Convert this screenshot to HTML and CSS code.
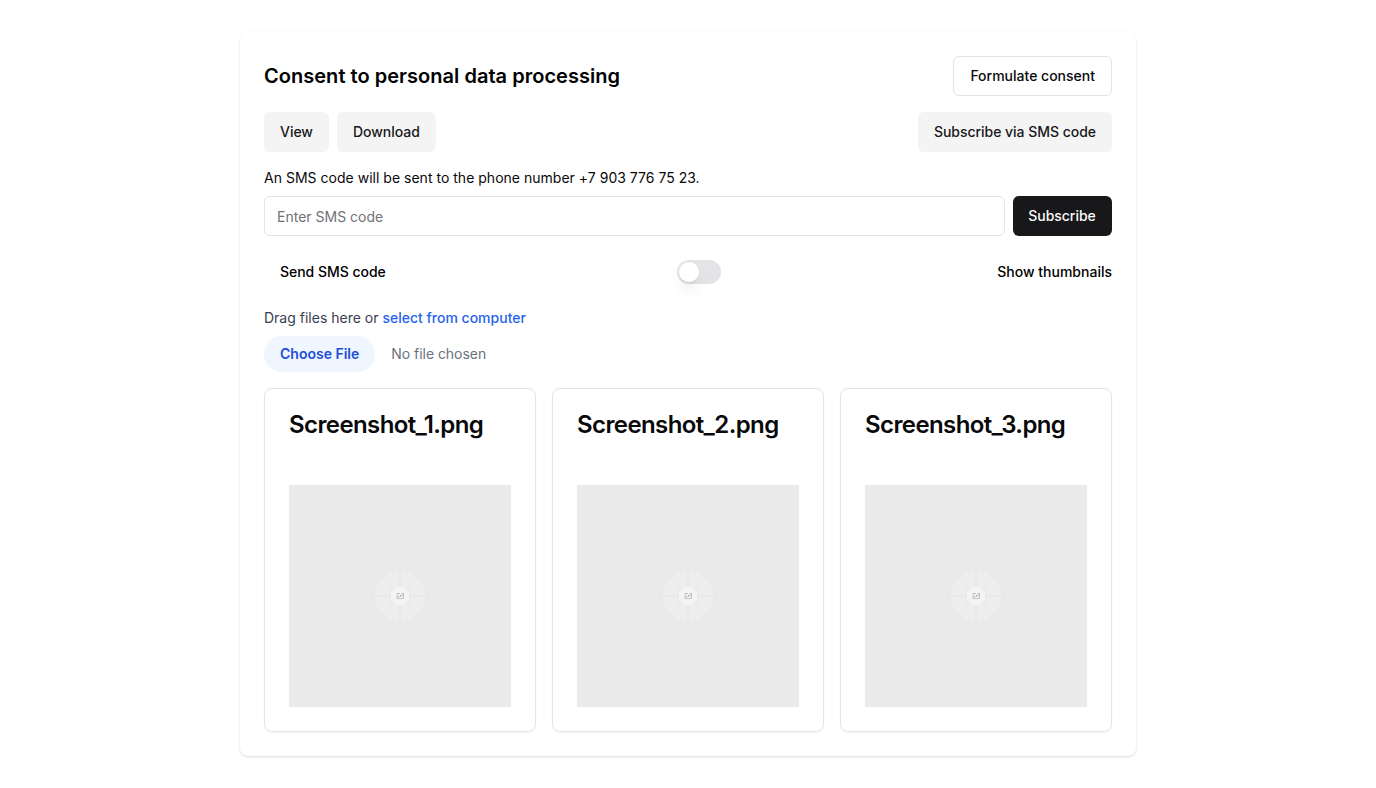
FILE: index.html
```html
<!DOCTYPE html>
<html lang="en">
<head>
<meta charset="utf-8">
<title>Consent to personal data processing</title>
<link rel="stylesheet" href="styles.css">
</head>
<body>
<main class="panel">
  <header class="row">
    <h1 class="title">Consent to personal data processing</h1>
    <button class="btn outline">Formulate consent</button>
  </header>
  <div class="row actions">
    <div class="group">
      <button class="btn secondary">View</button>
      <button class="btn secondary">Download</button>
    </div>
    <button class="btn secondary">Subscribe via SMS code</button>
  </div>
  <p class="hint">An SMS code will be sent to the phone number +7 903 776 75 23.</p>
  <div class="group code">
    <input class="input" type="text" placeholder="Enter SMS code">
    <button class="btn primary">Subscribe</button>
  </div>
  <div class="row options">
    <button class="btn ghost">Send SMS code</button>
    <button class="switch" role="switch" aria-checked="false" aria-label="Show thumbnails"><span class="thumb"></span></button>
    <span class="label">Show thumbnails</span>
  </div>
  <p class="drop">Drag files here or <span class="link">select from computer</span></p>
  <div class="file">
    <button class="choose">Choose File</button>
    <span class="chosen">No file chosen</span>
  </div>
  <div class="grid">
    <article class="card">
      <h3 class="name">Screenshot_1.png</h3>
      <svg class="preview" viewBox="0 0 222 222">
        <symbol id="placeholder" viewBox="0 0 222 222">
          <circle cx="111" cy="111" r="25" fill="#eeeeee"/>
          <path d="M111 80v62M80 111h62M86 86l50 50M136 86l-50 50" stroke="#e6e6e6" fill="none"/>
          <circle cx="111" cy="111" r="10" fill="#f4f4f4" stroke="#e9e9e9"/>
          <path d="M108 110v-1.500h3M112.500 108.500h2v5H108V112M107 111.500h3M111.500 110.500h3M111.500 110.500v1.500M110.500 111.500l1.500-2" stroke="#b5b5b5" stroke-width=".8" fill="none"/>
        </symbol>
        <use href="#placeholder"/>
      </svg>
    </article>
    <article class="card">
      <h3 class="name">Screenshot_2.png</h3>
      <svg class="preview" viewBox="0 0 222 222"><use href="#placeholder"/></svg>
    </article>
    <article class="card">
      <h3 class="name">Screenshot_3.png</h3>
      <svg class="preview" viewBox="0 0 222 222"><use href="#placeholder"/></svg>
    </article>
  </div>
</main>
</body>
</html>
```
FILE: styles.css
```css
*, *::before, *::after { box-sizing: border-box; }
body { margin: 0; padding: 32px 0; min-height: 100vh; background: #fff; color: #09090b; font: 14px/20px Inter, sans-serif; }
h1, h3, p { margin: 0; }
button, input { font: inherit; margin: 0; }
.panel {
  width: 896px;
  height: 724px;
  margin: 0 auto;
  padding: 24px;
  border-radius: 8px;
  background: #fff;
  box-shadow: 0 1px 3px 0 rgba(0, 0, 0, .1), 0 1px 2px -1px rgba(0, 0, 0, .1);
}
.row { display: flex; align-items: center; justify-content: space-between; }
.group { display: flex; gap: 8px; }
.title { font-size: 20px; line-height: 28px; font-weight: 600; letter-spacing: .03px; color: #000; }
.btn {
  height: 40px;
  padding: 0 16px;
  border: 0;
  border-radius: 6px;
  font-weight: 500;
  letter-spacing: -.03px;
  white-space: nowrap;
}
.outline { border: 1px solid #e4e4e7; background: #fff; color: #09090b; letter-spacing: 0; }
.secondary { background: #f4f4f5; color: #18181b; }
.primary { width: 99px; padding: 0 16px 0 15px; background: #18181b; color: #fafafa; }
.ghost { background: transparent; color: #000; }
.actions { margin-top: 16px; }
.hint { margin-top: 16px; letter-spacing: .015px; }
.code { margin-top: 8px; }
.input {
  flex: 1;
  height: 40px;
  padding: 8px 12px;
  border: 1px solid #e4e4e7;
  border-radius: 6px;
  background: #fff;
}
.input::placeholder { color: #71717a; opacity: 1; }
.options { margin-top: 16px; }
.switch {
  display: flex;
  width: 44px;
  height: 24px;
  padding: 2px;
  border: 0;
  border-radius: 12px;
  background: #e4e4e7;
}
.thumb {
  width: 20px;
  height: 20px;
  border-radius: 50%;
  background: #fff;
  box-shadow: 0 10px 15px -3px rgba(0, 0, 0, .1), 0 4px 6px -4px rgba(0, 0, 0, .1);
}
.label { font-weight: 500; color: #000; }
.drop { margin-top: 16px; color: #374151; }
.link { color: #2563eb; font-weight: 500; }
.file { display: flex; align-items: center; gap: 16px; height: 36px; margin-top: 8px; color: #6b7280; }
.chosen { letter-spacing: -.04px; }
.choose {
  height: 36px;
  padding: 0 16px;
  border: 0;
  border-radius: 18px;
  background: #eff6ff;
  color: #1d4ed8;
  font-weight: 600;
}
.grid { display: grid; grid-template-columns: repeat(3, 1fr); gap: 16px; margin-top: 16px; }
.card {
  height: 344px;
  padding: 24px;
  border: 1px solid #e4e4e7;
  border-radius: 8px;
  box-shadow: 0 1px 2px 0 rgba(0, 0, 0, .05);
}
.name { font-size: 24px; line-height: 24px; font-weight: 600; letter-spacing: -.6px; }
.preview { display: block; width: 222px; height: 222px; margin-top: 48px; background: #eaeaea; }
```
